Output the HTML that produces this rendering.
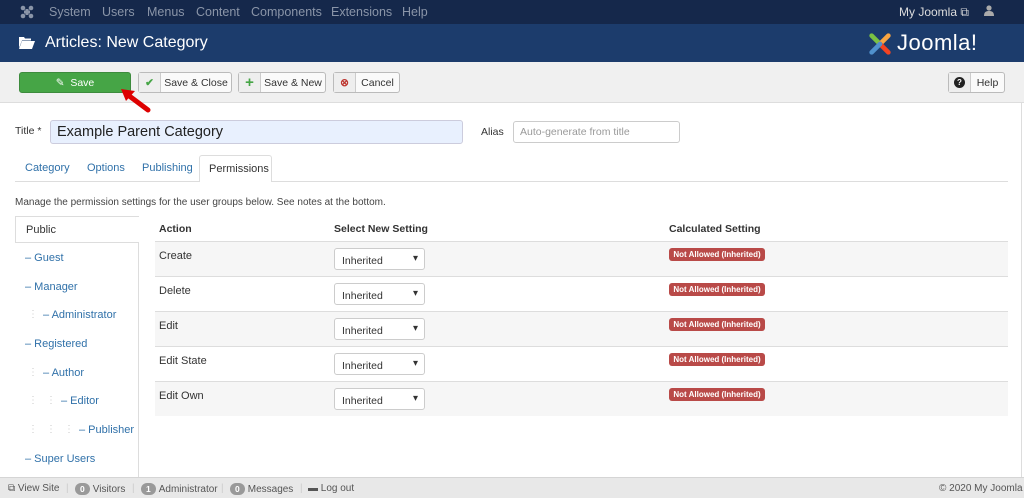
<!DOCTYPE html>
<html><head><meta charset="utf-8"><style>
*{box-sizing:border-box;margin:0;padding:0}
body{width:1024px;height:498px;overflow:hidden;font-family:"Liberation Sans",sans-serif;font-size:11px;color:#333;background:#fff;position:relative}
.abs{position:absolute}
.nav{left:0;top:0;width:1024px;height:24px;background:#15284b;color:#8a95a8;font-size:12.5px}
.nav span{position:absolute;top:5px}
.hdr{left:0;top:24px;width:1024px;height:38px;background:#1c3c6c;color:#fff}
.tb{left:0;top:62px;width:1024px;height:41px;background:#f0f0f0;border-bottom:1px solid #ddd}
.btn{position:absolute;top:10px;height:21px;border:1px solid #bbb;border-radius:3px;background:#fafafa;font-size:10.5px;color:#333;display:flex;align-items:center}
.btn .ic{width:22px;height:100%;border-right:1px solid #ccc;background:#eee;display:flex;align-items:center;justify-content:center;font-weight:bold}
.btn .t{flex:1;text-align:center}
.tab{position:absolute;top:162px;font-size:11px;color:#3071a9}
.side div{position:absolute;font-size:11px;color:#3071a9}
.dot{position:absolute;color:#ccc;font-size:10px}
.row{position:absolute;left:155px;width:853px;height:35px;border-top:1px solid #ddd}
.row .a{position:absolute;left:4px;top:8px}
.sel{position:absolute;left:179px;top:6px;width:91px;height:22px;border:1px solid #ccc;border-radius:3px;background:#fff;padding:6px 0 0 7px;font-size:10.5px}
.sel:after{content:"▾";position:absolute;right:6px;top:4px;font-size:10px}
.bd{position:absolute;left:514px;top:6px;width:96px;height:13px;background:#b94a48;color:#fff;border-radius:3px;font-size:8px;font-weight:bold;text-align:center;line-height:13px}
.ft{left:0;top:477px;width:1024px;height:21px;background:#e8e8e8;border-top:1px solid #d5d5d5;color:#555;font-size:10px}
.ft span{position:absolute;top:5px}
.pill{display:inline-block;background:#999;color:#fff;border-radius:8px;padding:0 5px;font-size:8.5px;font-weight:bold;line-height:12px;margin-right:3px;font-style:normal}
</style></head><body>
<div class="abs nav">
<svg class="abs" style="left:20px;top:5px" width="14" height="14" viewBox="0 0 14 14"><g fill="#8a95a8"><circle cx="3" cy="3" r="2.3"/><circle cx="11" cy="3" r="2.3"/><circle cx="3" cy="11" r="2.3"/><circle cx="11" cy="11" r="2.3"/><rect x="4" y="5.5" width="6" height="3"/><rect x="5.5" y="4" width="3" height="6"/></g></svg>
<span style="left:49px">System</span><span style="left:102px">Users</span><span style="left:147px">Menus</span><span style="left:196px">Content</span><span style="left:251px">Components</span><span style="left:331px">Extensions</span><span style="left:402px">Help</span>
<span style="left:899px;color:#ddd;font-size:12px">My Joomla ⧉</span>
<svg class="abs" style="left:984px;top:5px" width="10" height="11" viewBox="0 0 10 11"><circle cx="5" cy="3" r="2.6" fill="#aaa"/><path d="M0 11c0-4 2-5 5-5s5 1 5 5z" fill="#aaa"/></svg>
</div>
<div class="abs hdr">
<svg class="abs" style="left:19px;top:12px" width="16" height="13" viewBox="0 0 16 13"><path d="M0 1h5l1 1.5h6v2H3L0 12z M3 5h13l-3 8H0z" fill="#fff"/></svg>
<div class="abs" style="left:45px;top:10px;font-size:16px">Articles: New Category</div>
<svg class="abs" style="left:867px;top:7px" width="26" height="26" viewBox="0 0 28 28"><g stroke-width="5" stroke-linecap="round" fill="none"><path d="M5 5l9 9" stroke="#7ac143"/><path d="M23 5l-9 9" stroke="#f9a541"/><path d="M23 23l-9-9" stroke="#f44321"/><path d="M5 23l9-9" stroke="#5091cd"/></g></svg>
<div class="abs" style="left:897px;top:6px;font-size:22px;color:#fff;letter-spacing:0.5px">Joomla!</div>
</div>
<div class="abs tb">
<div class="btn" style="left:19px;width:112px;background:#46a546;border-color:#3d8b3d;color:#fff;justify-content:center">✎&nbsp; Save</div>
<div class="btn" style="left:138px;width:94px"><div class="ic" style="color:#46a546">✔</div><div class="t">Save &amp; Close</div></div>
<div class="btn" style="left:238px;width:88px"><div class="ic" style="color:#46a546;font-size:15px">+</div><div class="t">Save &amp; New</div></div>
<div class="btn" style="left:333px;width:67px"><div class="ic" style="color:#bd362f">⊗</div><div class="t">Cancel</div></div>
<div class="btn" style="left:948px;width:57px"><div class="ic"><span style="display:inline-block;width:11px;height:11px;border-radius:50%;background:#222;color:#fff;font-size:8px;text-align:center;line-height:11px">?</span></div><div class="t">Help</div></div>
</div>
<svg class="abs" style="left:118px;top:86px" width="36" height="30" viewBox="0 0 36 30"><path d="M30 24L10 9" stroke="#d00" stroke-width="5" stroke-linecap="round"/><path d="M3 3l14 2-9 10z" fill="#d00"/></svg>
<div class="abs" style="left:15px;top:125px;font-size:10.5px">Title *</div>
<div class="abs" style="left:50px;top:120px;width:413px;height:24px;background:#e8f0fe;border:1px solid #ccd;border-radius:3px;font-size:14.5px;padding:3px 6px;color:#222">Example Parent Category</div>
<div class="abs" style="left:481px;top:126px;font-size:10.5px">Alias</div>
<div class="abs" style="left:513px;top:121px;width:167px;height:22px;border:1px solid #ccc;border-radius:3px;font-size:10.5px;padding:4px 6px;color:#999">Auto-generate from title</div>
<div class="abs" style="left:15px;top:181px;width:993px;border-top:1px solid #ddd"></div>
<div class="tab" style="left:25px">Category</div><div class="tab" style="left:87px">Options</div><div class="tab" style="left:142px">Publishing</div>
<div class="abs" style="left:199px;top:155px;width:73px;height:27px;background:#fff;border:1px solid #ddd;border-bottom:none;border-radius:3px 3px 0 0;padding:7px 0 0 9px;font-size:11px">Permissions</div>
<div class="abs" style="left:15px;top:197px;font-size:10px;color:#444">Manage the permission settings for the user groups below. See notes at the bottom.</div>
<div class="abs" style="left:15px;top:216px;width:124px;height:261px;border-right:1px solid #ddd"></div>
<div class="abs" style="left:15px;top:216px;width:124px;height:27px;border:1px solid #ddd;border-right:none;background:#fff;padding:7px 0 0 10px;font-size:11px">Public</div>
<div class="side">
<div style="top:252px;left:25px">– Guest</div>
<div style="top:281px;left:25px">– Manager</div>
<div style="top:309px;left:43px">– Administrator</div>
<div style="top:338px;left:25px">– Registered</div>
<div style="top:367px;left:43px">– Author</div>
<div style="top:395px;left:61px">– Editor</div>
<div style="top:424px;left:79px">– Publisher</div>
<div style="top:453px;left:25px">– Super Users</div>
</div>
<div class="dot" style="left:28px;top:309px">⋮</div>
<div class="dot" style="left:28px;top:367px">⋮</div>
<div class="dot" style="left:28px;top:395px">⋮</div><div class="dot" style="left:46px;top:395px">⋮</div>
<div class="dot" style="left:28px;top:424px">⋮</div><div class="dot" style="left:46px;top:424px">⋮</div><div class="dot" style="left:64px;top:424px">⋮</div>
<div class="abs" style="left:159px;top:223px;font-weight:bold;font-size:10.5px">Action</div>
<div class="abs" style="left:334px;top:223px;font-weight:bold;font-size:10.5px">Select New Setting</div>
<div class="abs" style="left:669px;top:223px;font-weight:bold;font-size:10.5px">Calculated Setting</div>
<div class="row" style="top:241px;background:#f6f6f6"><div class="a">Create</div><div class="sel">Inherited</div><div class="bd">Not Allowed (Inherited)</div></div>
<div class="row" style="top:276px"><div class="a">Delete</div><div class="sel">Inherited</div><div class="bd">Not Allowed (Inherited)</div></div>
<div class="row" style="top:311px;background:#f6f6f6"><div class="a">Edit</div><div class="sel">Inherited</div><div class="bd">Not Allowed (Inherited)</div></div>
<div class="row" style="top:346px"><div class="a">Edit State</div><div class="sel">Inherited</div><div class="bd">Not Allowed (Inherited)</div></div>
<div class="row" style="top:381px;background:#f6f6f6"><div class="a">Edit Own</div><div class="sel">Inherited</div><div class="bd">Not Allowed (Inherited)</div></div>
<div class="abs" style="left:1021px;top:103px;height:374px;border-left:1px solid #ddd"></div>
<div class="abs ft">
<span style="left:8px">⧉ View Site</span><span style="left:66px;color:#ccc">|</span>
<span style="left:75px"><i class="pill">0</i>Visitors</span><span style="left:132px;color:#ccc">|</span>
<span style="left:141px"><i class="pill">1</i>Administrator</span><span style="left:221px;color:#ccc">|</span>
<span style="left:230px"><i class="pill">0</i>Messages</span><span style="left:300px;color:#ccc">|</span>
<span style="left:308px">▬ Log out</span>
<span style="left:939px">© 2020 My Joomla</span>
</div>
</body></html>
